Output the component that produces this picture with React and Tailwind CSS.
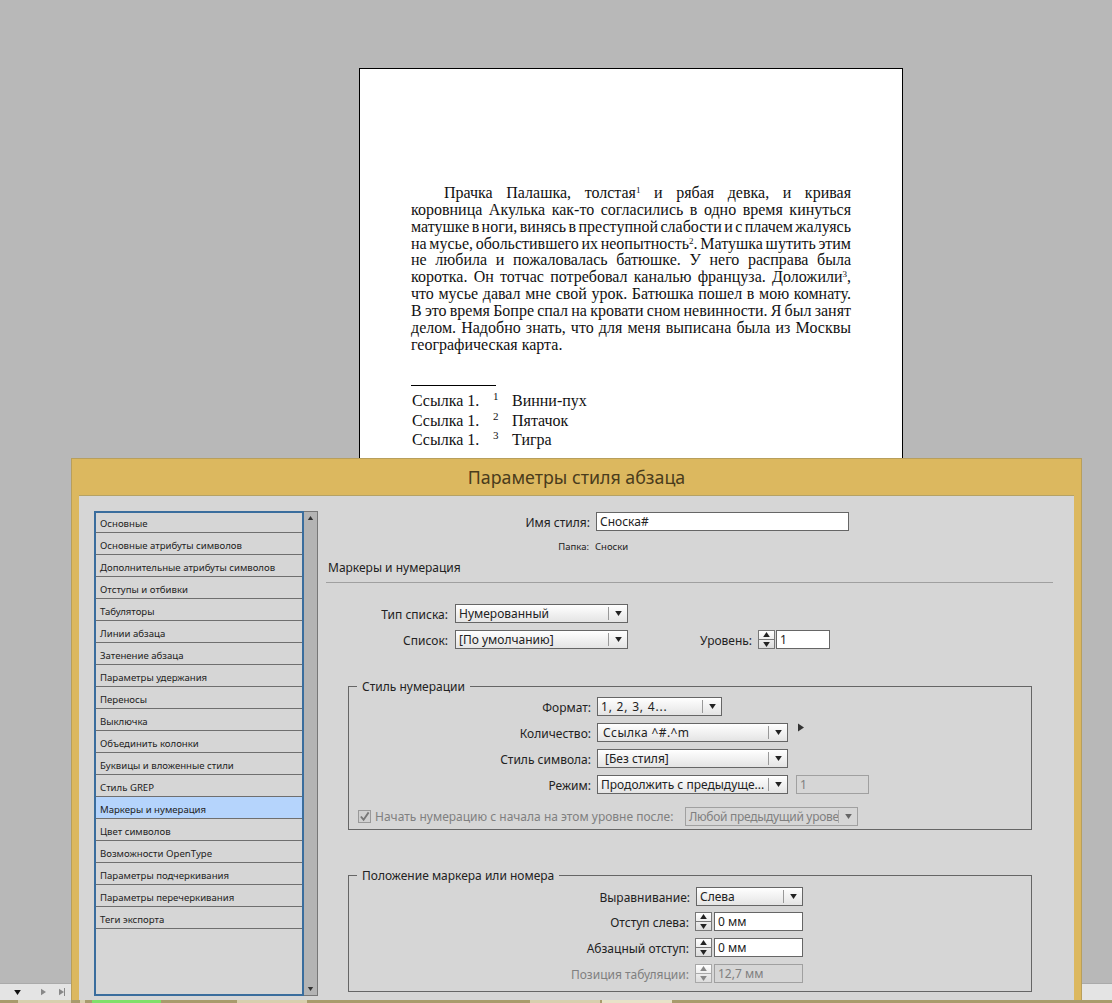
import React from "react";

const uiFont = "font-['Noto_Sans',_'Liberation_Sans',_sans-serif]";

const styleItems = [
  "Основные",
  "Основные атрибуты символов",
  "Дополнительные атрибуты символов",
  "Отступы и отбивки",
  "Табуляторы",
  "Линии абзаца",
  "Затенение абзаца",
  "Параметры удержания",
  "Переносы",
  "Выключка",
  "Объединить колонки",
  "Буквицы и вложенные стили",
  "Стиль GREP",
  "Маркеры и нумерация",
  "Цвет символов",
  "Возможности OpenType",
  "Параметры подчеркивания",
  "Параметры перечеркивания",
  "Теги экспорта",
];

const Sup = ({ children }) => (
  <sup className="text-[9px] leading-none align-baseline relative -top-[5px]">{children}</sup>
);

const Line = ({ children, indent, last }) => (
  <div
    className={`h-[16.85px] leading-[16.85px] ${
      last ? "" : "text-justify [text-align-last:justify] [word-spacing:-2.5px]"
    } ${indent ? "pl-[33px]" : ""}`}
  >
    {children}
  </div>
);

const Triangle = ({ dir = "down", className = "" }) => {
  const pts = {
    down: "0,0 8,0 4,6",
    up: "0,6 8,6 4,0",
    right: "0,0 6,4 0,8",
  };
  const box = dir === "right" ? "0 0 6 8" : "0 0 8 6";
  return (
    <svg viewBox={box} className={className} fill="currentColor">
      <polygon points={pts[dir]} />
    </svg>
  );
};

const Select = ({ value, width, disabled, pad = "pl-[3px]" }) => (
  <div
    style={{ width }}
    className={`h-[19px] flex items-center border shrink-0 ${
      disabled
        ? "border-[#a0a0a0] bg-[#d6d6d6] text-[#808080]"
        : "border-[#666] bg-gradient-to-b from-white to-[#e4e4e4] text-[#222]"
    }`}
  >
    <span className={`flex-1 min-w-0 overflow-hidden whitespace-nowrap text-[12px] leading-[18px] pt-[1px] ${pad}`}>
      {value}
    </span>
    <span className={`w-[1px] h-[13px] ${disabled ? "bg-[#aaa]" : "bg-[#999]"}`} />
    <span className={`w-[18px] flex justify-center ${disabled ? "text-[#666]" : "text-[#222]"}`}>
      <Triangle className="w-[7px] h-[5px]" />
    </span>
  </div>
);

const Spinner = ({ disabled }) => (
  <div
    className={`w-[17px] h-[19px] flex flex-col items-center justify-center gap-[2px] border shrink-0 bg-gradient-to-b from-white to-[#dcdcdc] ${
      disabled ? "border-[#a8a8a8] text-[#888]" : "border-[#777] text-[#222]"
    }`}
  >
    <Triangle dir="up" className="w-[7px] h-[5px]" />
    <span className={`w-full h-[1px] ${disabled ? "bg-[#aaa]" : "bg-[#777]"}`} />
    <Triangle className="w-[7px] h-[5px]" />
  </div>
);

const TextBox = ({ value, width, disabled }) => (
  <div
    style={{ width }}
    className={`h-[19px] border text-[12px] leading-[18px] pl-[3px] shrink-0 ${
      disabled ? "border-[#a0a0a0] bg-[#d6d6d6] text-[#808080]" : "border-[#666] bg-white text-[#222]"
    }`}
  >
    {value}
  </div>
);

const Label = ({ width, children, disabled }) => (
  <span
    style={{ width }}
    className={`h-[19px] shrink-0 text-right whitespace-nowrap text-[12px] leading-[21px] ${
      disabled ? "text-[#808080]" : "text-[#222]"
    }`}
  >
    {children}
  </span>
);

const Group = ({ title, height, className = "", children }) => (
  <div style={{ height }} className={`relative ml-[22px] w-[684px] border border-[#666] ${className}`}>
    <span className="absolute -top-[8px] left-[8px] bg-[#d6d6d6] px-[5px] text-[12px] leading-[16px] text-[#222] whitespace-nowrap">
      {title}
    </span>
    {children}
  </div>
);

export default function App() {
  return (
    <div className={`relative h-[1003px] w-[1112px] overflow-hidden flex flex-col bg-[#b8b8b8] ${uiFont}`}>
      {/* рабочая область с полосой */}
      <div className="flex-1 min-h-0 overflow-hidden pt-[68px] pl-[359px]">
        <div className="w-[544px] h-[800px] border border-black bg-white pt-[116px] pl-[51px] font-['Liberation_Serif',_serif] text-[16px] text-[#111]">
          <div className="w-[440px]">
            <Line indent>Прачка Палашка, толстая<Sup>1</Sup> и рябая девка, и кривая</Line>
            <Line>коровница Акулька как-то согласились в одно время кинуться</Line>
            <Line>матушке в ноги, винясь в преступной слабости и с плачем жалуясь</Line>
            <Line>на мусье, обольстившего их неопытность<Sup>2</Sup>. Матушка шутить этим</Line>
            <Line>не любила и пожаловалась батюшке. У него расправа была</Line>
            <Line>коротка. Он тотчас потребовал каналью француза. Доложили<Sup>3</Sup>,</Line>
            <Line>что мусье давал мне свой урок. Батюшка пошел в мою комнату.</Line>
            <Line>В это время Бопре спал на кровати сном невинности. Я был занят</Line>
            <Line>делом. Надобно знать, что для меня выписана была из Москвы</Line>
            <Line last>географическая карта.</Line>
          </div>
          <div className="w-[85px] h-[1px] bg-black mt-[32px]" />
          <div className="mt-[5px]">
            {[
              ["1", "Винни-пух"],
              ["2", "Пятачок"],
              ["3", "Тигра"],
            ].map(([n, name]) => (
              <div key={n} className="flex h-[19.5px] leading-[19.5px] pl-[1px]">
                <span className="w-[80px]">Ссылка 1.</span>
                <span className="w-[20px] text-[11px] leading-[10px] pl-[1px]">{n}</span>
                <span>{name}</span>
              </div>
            ))}
          </div>
        </div>
      </div>

      {/* строка состояния */}
      <div className="h-[17px] shrink-0 bg-[#e4e4e4] border-t border-[#aaa] flex items-center">
        <Triangle className="ml-[14px] w-[7px] h-[5px] text-[#111]" />
        <Triangle dir="right" className="ml-[20px] w-[5px] h-[8px] text-[#888]" />
        <Triangle dir="right" className="ml-[13px] w-[5px] h-[8px] text-[#888]" />
        <span className="w-[1px] h-[8px] bg-[#888]" />
      </div>

      {/* панель задач */}
      <div className="h-[3px] shrink-0 bg-[#a89b6c] flex">
        <span className="ml-[18px] w-[53px] bg-[#d8cfae]" />
        <span className="ml-[9px] w-[5px] bg-[#d8cfae]" />
        <span className="ml-[7px] w-[69px] bg-[#7fe06a]" />
        <span className="ml-[76px] w-[70px] bg-[#d8cfae]" />
        <span className="ml-[223px] w-[70px] bg-[#d8cfae]" />
        <span className="ml-[2px] w-[70px] bg-[#e8e2c8]" />
      </div>

      {/* диалог */}
      <div className="absolute left-[71px] top-[458px] w-[1011px] h-[542px] bg-[#dcb85f] border-x border-t border-[#b89f5c] flex flex-col">
        <div className="h-[36px] shrink-0 flex items-center justify-center text-[17.8px] text-[#4a3c1c]">
          Параметры стиля абзаца
        </div>
        <div className="flex-1 min-h-0 mx-[7px] bg-[#d6d6d6] border-t border-[#b5a265] flex">
          {/* список разделов */}
          <div className="ml-[15px] mt-[15px] w-[224px] h-[485px] flex shrink-0">
            <div className="w-[210px] border-2 border-[#3a6d9d]">
              {styleItems.map((item, i) => (
                <div
                  key={item}
                  className={`h-[22px] leading-[26px] first:h-[20px] first:leading-[21px] border-b border-[#6f6f6f] pl-[4px] text-[9.6px] text-[#222] whitespace-nowrap ${
                    i === 13 ? "bg-[#b5d4fc]" : ""
                  }`}
                >
                  {item}
                </div>
              ))}
            </div>
            <div className="w-[14px] bg-[#b4b4b4] border-y border-r border-[#777] flex flex-col items-center justify-between py-[4px] text-[#333]">
              <Triangle dir="up" className="w-[7px] h-[4px]" />
              <Triangle className="w-[7px] h-[4px]" />
            </div>
          </div>

          {/* настройки */}
          <div className="ml-[8px] w-[727px]">
            <div className="mt-[16px] flex">
              <Label width={264}>Имя стиля:</Label>
              <div className="ml-[6px] w-[253px] h-[19px] border border-[#666] bg-white text-[12px] leading-[18px] pl-[3px] text-[#222]">
                Сноска#
              </div>
            </div>
            <div className="mt-[9px] h-[14px] flex text-[9.5px] leading-[14px] text-[#222]">
              <span className="w-[263px] text-right">Папка:</span>
              <span className="ml-[6px]">Сноски</span>
            </div>
            <div className="mt-[6px] pl-[2px] h-[16px] text-[12px] leading-[16px] text-[#222]">Маркеры и нумерация</div>
            <div className="mt-[6px] h-[1px] bg-[#a0a0a0]" />

            <div className="mt-[21px] flex">
              <Label width={122}>Тип списка:</Label>
              <div className="ml-[7px]">
                <Select value="Нумерованный" width={173} />
              </div>
            </div>
            <div className="mt-[7px] flex">
              <Label width={122}>Список:</Label>
              <div className="ml-[7px]">
                <Select value="[По умолчанию]" width={173} />
              </div>
              <Label width={124}>Уровень:</Label>
              <div className="ml-[6px] flex gap-[1px]">
                <Spinner />
                <TextBox value="1" width={54} />
              </div>
            </div>

            <Group title="Стиль нумерации" height={144} className="mt-[37px]">
              <div className="pt-[10px] flex">
                <Label width={242}>Формат:</Label>
                <div className="ml-[6px]">
                  <Select value="1, 2, 3, 4..." width={125} pad="pl-[3px] tracking-[0.8px]" />
                </div>
              </div>
              <div className="mt-[7px] flex">
                <Label width={242}>Количество:</Label>
                <div className="ml-[6px]">
                  <Select value="Ссылка ^#.^m" width={191} pad="pl-[5px] tracking-[0.4px]" />
                </div>
                <Triangle dir="right" className="ml-[10px] w-[6px] h-[9px] text-[#333]" />
              </div>
              <div className="mt-[7px] flex">
                <Label width={242}>Стиль символа:</Label>
                <div className="ml-[6px]">
                  <Select value="[Без стиля]" width={191} pad="pl-[7px]" />
                </div>
              </div>
              <div className="mt-[7px] flex">
                <Label width={242}>Режим:</Label>
                <div className="ml-[6px]">
                  <Select value="Продолжить с предыдуще..." width={191} />
                </div>
                <div className="ml-[8px]">
                  <TextBox value="1" width={73} disabled />
                </div>
              </div>
              <div className="mt-[13px] flex items-center">
                <div className="ml-[9px] w-[13px] h-[13px] border border-[#999] bg-[#d0d0d0] text-[#777] flex items-center justify-center shrink-0">
                  <svg viewBox="0 0 12 12" className="w-[11px] h-[11px]" fill="none" stroke="currentColor" strokeWidth="2">
                    <path d="M2 6l3 3.5L10.5 1.5" />
                  </svg>
                </div>
                <span className="ml-[4px] w-[310px] text-[12px] leading-[19px] text-[#808080] whitespace-nowrap">
                  Начать нумерацию с начала на этом уровне после:
                </span>
                <Select value="Любой предыдущий урове" width={173} disabled pad="pl-[3px] tracking-[-0.3px]" />
              </div>
            </Group>

            <Group title="Положение маркера или номера" height={117} className="mt-[45px]">
              <div className="pt-[11px] flex">
                <Label width={341}>Выравнивание:</Label>
                <div className="ml-[6px]">
                  <Select value="Слева" width={107} />
                </div>
              </div>
              <div className="mt-[6px] flex">
                <Label width={340}>Отступ слева:</Label>
                <div className="ml-[6px] flex gap-[2px]">
                  <Spinner />
                  <TextBox value="0 мм" width={89} />
                </div>
              </div>
              <div className="mt-[7px] flex">
                <Label width={340}>Абзацный отступ:</Label>
                <div className="ml-[6px] flex gap-[2px]">
                  <Spinner />
                  <TextBox value="0 мм" width={89} />
                </div>
              </div>
              <div className="mt-[7px] flex">
                <Label width={340} disabled>Позиция табуляции:</Label>
                <div className="ml-[6px] flex gap-[2px]">
                  <Spinner disabled />
                  <TextBox value="12,7 мм" width={89} disabled />
                </div>
              </div>
            </Group>
          </div>
        </div>
      </div>
    </div>
  );
}
